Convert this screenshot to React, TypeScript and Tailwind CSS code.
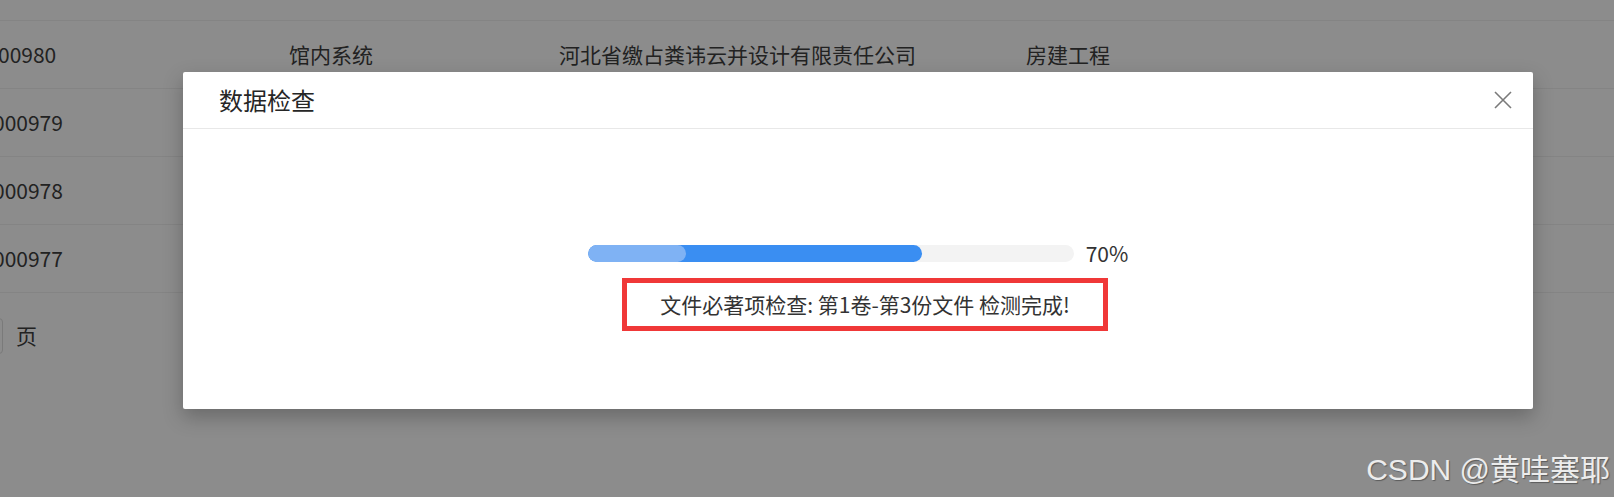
import React from 'react';

const rows = [
  { id: '00980', shift: 'ml-[-2px]', sys: '馆内系统', unit: '河北省缴占粪讳云并设计有限责任公司', type: '房建工程' },
  { id: '000979', shift: 'ml-[-7px]', sys: '', unit: '', type: '' },
  { id: '000978', shift: 'ml-[-7px]', sys: '', unit: '', type: '' },
  { id: '000977', shift: 'ml-[-7px]', sys: '', unit: '', type: '' },
];

const App = () => {
  return (
    <div
      className="relative w-[1614px] h-[497px] overflow-hidden bg-[#8c8c8c] text-[#222]"
      style={{ fontFamily: '"Noto Sans CJK SC", "Noto Sans", sans-serif' }}
    >
      {/* Table behind the mask */}
      <div className="h-[21px] border-b border-[#848484]"></div>
      {rows.map((r) => (
        <div key={r.id} className="flex items-center h-[68px] border-b border-[#848484] text-[21px]">
          <div className={`w-[291px] ${r.shift}`}>{r.id}</div>
          <div className="w-[270px]">{r.sys}</div>
          <div className="w-[467px]">{r.unit}</div>
          <div>{r.type}</div>
        </div>
      ))}

      {/* Pagination */}
      <div className="flex items-center mt-[25px] h-[36px] text-[21px]">
        <div className="ml-[-40px] w-[43px] h-[36px] border border-[#7a7a7a] rounded-[4px]"></div>
        <span className="ml-[13px]">页</span>
      </div>

      {/* Modal */}
      <div className="absolute top-[72px] left-[183px] w-[1350px] h-[337px] bg-white rounded-[2px] shadow-[0_8px_20px_rgba(0,0,0,0.25)]">
        <div className="flex items-center justify-between h-[57px] pl-[36px] pr-[20px] border-b border-[#e8e8e8]">
          <span className="text-[24px] text-[#262626]">数据检查</span>
          <svg width="20" height="20" viewBox="0 0 20 20" className="text-[#7a7a7a]">
            <path d="M2 2 L18 18 M18 2 L2 18" stroke="currentColor" strokeWidth="1.6" fill="none" />
          </svg>
        </div>
        <div className="pt-[114px] flex flex-col items-center">
          <div className="flex items-center">
            <div className="relative w-[486px] h-[17px] rounded-full bg-[#f3f3f3] overflow-hidden">
              <div className="absolute inset-y-0 left-0 w-[334px] rounded-full bg-[#3a8ef2]"></div>
              <div className="absolute inset-y-0 left-0 w-[98px] rounded-full bg-[#7fb2f4]"></div>
            </div>
            <span className="ml-[12px] text-[21px] text-[#333] leading-none">70%</span>
          </div>
          <div className="mt-[14px] ml-[14px] w-[486px] h-[53px] border-[5px] border-[#f03838] flex items-center justify-center text-[21px] text-[#333]">
            文件必著项检查: 第1卷-第3份文件 检测完成!
          </div>
        </div>
      </div>

      {/* Watermark */}
      <div
        className="absolute right-[4px] bottom-[12px] text-[30px] leading-none text-[#ececec] [text-shadow:1px_1px_1px_rgba(0,0,0,0.35)]"
        style={{ fontFamily: '"Liberation Sans", "Noto Sans CJK SC", sans-serif' }}
      >
        CSDN @黄哇塞耶
      </div>
    </div>
  );
};

export default App;
